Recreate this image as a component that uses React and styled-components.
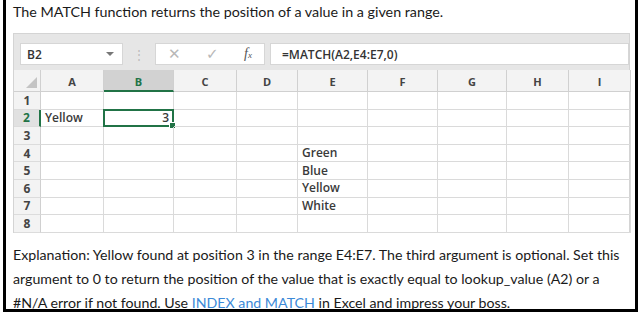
import React from 'react';
import styled, { createGlobalStyle } from 'styled-components';

const GlobalStyle = createGlobalStyle`
  html, body {
    margin: 0;
    background: #ffffff;
  }
  body {
    font-family: "Lato", "Open Sans", sans-serif;
    color: #222;
  }
`;

const COLUMNS = ['A', 'B', 'C', 'D', 'E', 'F', 'G', 'H', 'I'];
const WIDTHS = [63, 70, 63, 61, 70, 70, 69, 62, 62];

const CELLS = {
  'A2': { text: 'Yellow' },
  'B2': { text: '3', align: 'right', selected: true },
  'E4': { text: 'Green' },
  'E5': { text: 'Blue' },
  'E6': { text: 'Yellow' },
  'E7': { text: 'White' },
};

const App = () => {
  const rows = [1, 2, 3, 4, 5, 6, 7, 8];
  return (
    <Page>
      <GlobalStyle />
      <Frame>
        <Title>The MATCH function returns the position of a value in a given range.</Title>
        <Sheet>
          <FormulaBar>
            <NameBox>
              B2
              <DropArrow />
            </NameBox>
            <Dots>⋮</Dots>
            <ButtonsBox>
              <FaintGlyph>✕</FaintGlyph>
              <FaintGlyph>✓</FaintGlyph>
              <Fx><i>f</i><sub>x</sub></Fx>
            </ButtonsBox>
            <FormulaBox>=MATCH(A2,E4:E7,0)</FormulaBox>
          </FormulaBar>
          <Grid>
            <Corner>
              <CornerTriangle />
            </Corner>
            {COLUMNS.map((c) => (
              <ColHeader key={c} $active={c === 'B'}>{c}</ColHeader>
            ))}
            {rows.map((r) => (
              <React.Fragment key={r}>
                <RowHeader $active={r === 2}>{r}</RowHeader>
                {COLUMNS.map((c) => {
                  const cell = CELLS[c + r];
                  return (
                    <Cell key={c + r} $align={cell && cell.align}>
                      {cell && cell.text}
                      {cell && cell.selected && (
                        <Selection>
                          <Handle />
                        </Selection>
                      )}
                    </Cell>
                  );
                })}
              </React.Fragment>
            ))}
          </Grid>
        </Sheet>
        <Explanation>
          <Line>Explanation: Yellow found at position 3 in the range E4:E7. The third argument is optional. Set this</Line>
          <Line>argument to 0 to return the position of the value that is exactly equal to lookup_value (A2) or a</Line>
          <Line>#N/A error if not found. Use <Link href="#">INDEX and MATCH</Link> in Excel and impress your boss.</Line>
        </Explanation>
      </Frame>
    </Page>
  );
};

const Page = styled.div`
  width: 641px;
  height: 315px;
  padding-left: 3px;
  box-sizing: border-box;
  overflow: hidden;
`;

const Frame = styled.div`
  width: 635px;
  height: 312px;
  box-sizing: border-box;
  border: 3px solid #000;
  border-top: none;
  padding: 2px 5px 0 7px;
  background: #fff;
  overflow: hidden;
`;

const Title = styled.div`
  font-size: 14.3px;
  line-height: 20px;
  color: #1a1a1a;
  margin-bottom: 11px;
`;

const Sheet = styled.div`
  width: 617px;
  background: #e6e6e6;
  border: 1px solid #d4d4d4;
  border-bottom: none;
  box-sizing: border-box;
  font-family: "Open Sans", sans-serif;
`;

const FormulaBar = styled.div`
  display: flex;
  align-items: center;
  height: 22px;
  padding: 9px 0 0 6px;
  margin-bottom: 5px;
`;

const BoxBase = styled.div`
  height: 22px;
  box-sizing: border-box;
  background: #fff;
  border: 1px solid #d6d6d6;
  display: flex;
  align-items: center;
`;

const NameBox = styled(BoxBase)`
  width: 103px;
  padding: 0 8px 0 6px;
  justify-content: space-between;
  font-size: 12px;
  font-weight: 600;
  color: #333;
`;

const DropArrow = styled.span`
  width: 0;
  height: 0;
  border-left: 4px solid transparent;
  border-right: 4px solid transparent;
  border-top: 4px solid #777;
`;

const Dots = styled.span`
  width: 32px;
  text-align: center;
  color: #bbb;
  font-size: 12px;
`;

const ButtonsBox = styled(BoxBase)`
  width: 110px;
  padding: 0 12px 0 12px;
  justify-content: space-between;
`;

const FaintGlyph = styled.span`
  color: #b8b8b8;
  font-size: 15px;
  font-family: "DejaVu Sans", sans-serif;
`;

const Fx = styled.span`
  font-family: "Liberation Serif", serif;
  color: #555;
  font-size: 14px;
  i {
    font-style: italic;
  }
  sub {
    font-size: 9px;
    font-style: italic;
    vertical-align: baseline;
  }
`;

const FormulaBox = styled(BoxBase)`
  flex: 1;
  margin-left: 5px;
  padding-left: 11px;
  font-size: 12px;
  font-weight: 600;
  color: #333;
`;

const Grid = styled.div`
  display: grid;
  grid-template-columns: 27px ${WIDTHS.map((w) => w + 'px').join(' ')};
  grid-template-rows: 22px repeat(8, 17.6px);
  background: #fff;
  font-size: 12px;
  color: #333;
`;

const HeaderBase = styled.div`
  box-sizing: border-box;
  background: #f3f3f3;
  color: #444;
  display: flex;
  align-items: center;
  justify-content: center;
`;

const Corner = styled(HeaderBase)`
  position: relative;
  border-right: 1px solid #d0d0d0;
  border-bottom: 1px solid #d0d0d0;
`;

const CornerTriangle = styled.span`
  position: absolute;
  right: 3px;
  bottom: 3px;
  width: 0;
  height: 0;
  border-left: 11px solid transparent;
  border-bottom: 11px solid #c4c4c4;
`;

const ColHeader = styled(HeaderBase)`
  font-weight: 700;
  font-size: 11px;
  padding-top: 2px;
  border-right: 1px solid #d0d0d0;
  border-bottom: ${(p) => (p.$active ? '2px solid #217346' : '1px solid #d0d0d0')};
  background: ${(p) => (p.$active ? '#d2d2d2' : '#f3f3f3')};
  color: ${(p) => (p.$active ? '#217346' : '#444')};
`;

const RowHeader = styled(HeaderBase)`
  font-weight: 700;
  font-size: 12px;
  border-bottom: 1px solid #dcdcdc;
  border-right: ${(p) => (p.$active ? '2px solid #217346' : '1px solid #d0d0d0')};
  background: ${(p) => (p.$active ? '#e1e1e1' : '#f3f3f3')};
  color: ${(p) => (p.$active ? '#217346' : '#444')};
`;

const Cell = styled.div`
  position: relative;
  box-sizing: border-box;
  border-right: 1px solid #dadada;
  border-bottom: 1px solid #dadada;
  padding: 0 4px;
  display: flex;
  align-items: center;
  justify-content: ${(p) => (p.$align === 'right' ? 'flex-end' : 'flex-start')};
  font-weight: 600;
  color: #3a3a3a;
  line-height: 1;
`;

const Selection = styled.span`
  position: absolute;
  left: -1px;
  top: -1px;
  right: -1px;
  bottom: -1px;
  border: 2px solid #217346;
`;

const Handle = styled.span`
  position: absolute;
  right: -4px;
  bottom: -4px;
  width: 5px;
  height: 5px;
  background: #217346;
  border: 1px solid #fff;
`;

const Explanation = styled.div`
  margin: 10px 0 0;
  font-size: 14.2px;
  line-height: 24px;
  color: #1a1a1a;
`;

const Line = styled.div`
  white-space: nowrap;
`;

const Link = styled.a`
  color: #3c8ad8;
  text-decoration: none;
`;

export default App;
